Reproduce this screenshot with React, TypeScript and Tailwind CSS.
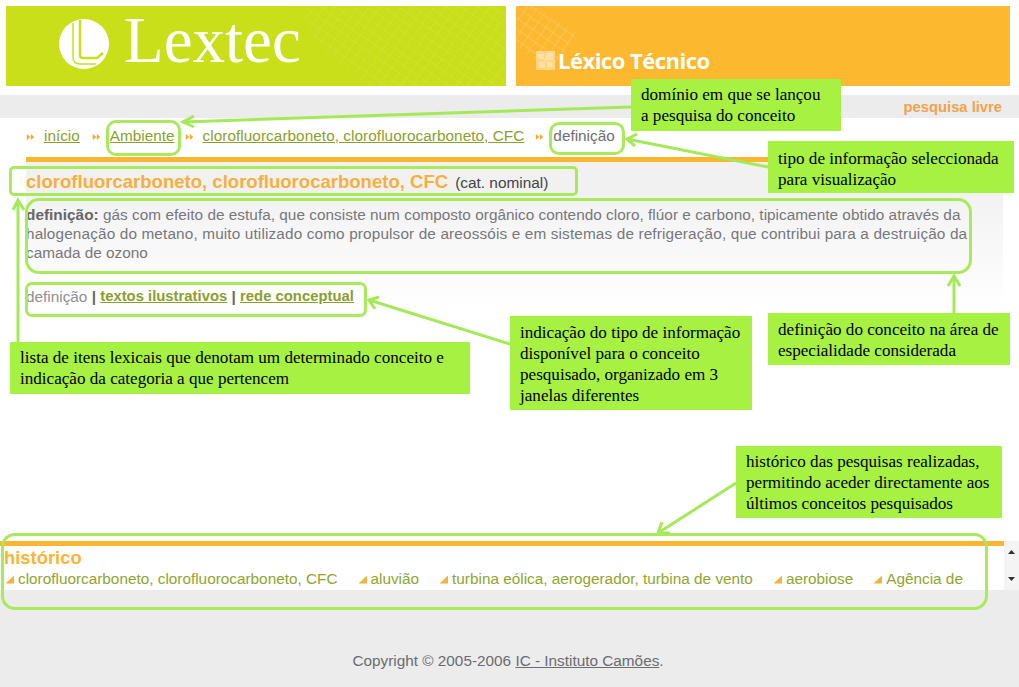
import React from "react";

const ring = "absolute border-[3px] border-[#a8ea5c] rounded-[10px]";
const callout = "absolute bg-[#a6f142] text-black text-[17.1px] leading-[21px] font-['Liberation_Serif',serif] pl-[10px] whitespace-nowrap";
const link = "text-[#8ba02c] underline";

function Chevrons() {
  return (
    <svg width="9" height="8" viewBox="0 0 9 8" className="shrink-0 mt-[2px]">
      <path d="M1 1.5 L4 4 L1 6.5 Z M5 1.5 L8 4 L5 6.5 Z" fill="#f6a82c" stroke="#f6a82c" strokeWidth="0.5" />
    </svg>
  );
}

function Crumb({ children, className }: { children: React.ReactNode; className: string }) {
  return (
    <span className={`flex items-center gap-[9px] ${className}`}>
      <Chevrons />
      {children}
    </span>
  );
}

function HistoryItem({ label }: { label: string }) {
  return (
    <span className="flex items-center gap-[3px] whitespace-nowrap mr-[20px]">
      <svg width="10" height="9" viewBox="0 0 10 9" className="shrink-0">
        <path d="M0.5 8.5 L9 0.5 L9 8.5 Z" fill="#f4b23e" />
      </svg>
      {label}
    </span>
  );
}

function Hatch({ id, points, opacity }: { id: string; points: string; opacity: number }) {
  return (
    <svg className="absolute inset-0 w-full h-full" aria-hidden="true">
      <defs>
        <pattern id={id} width="9" height="9" patternUnits="userSpaceOnUse" patternTransform="rotate(35)">
          <path d="M0 0H9M0 0V9" stroke="#ffffff" strokeOpacity={opacity} strokeWidth="1" fill="none" />
        </pattern>
      </defs>
      <polygon points={points} fill={`url(#${id})`} />
    </svg>
  );
}

function Overlay() {
  const c = "#a4ea58";
  const head = (pts: string) => <polyline points={pts} fill="none" stroke={c} strokeWidth="3" />;
  return (
    <svg className="absolute inset-0 pointer-events-none" width="1019" height="687">
      <line x1="631" y1="107" x2="183" y2="122" stroke={c} strokeWidth="3" />
      {head("194,116 183,122 194,127")}
      <line x1="768" y1="167" x2="627" y2="139" stroke={c} strokeWidth="3" />
      {head("637,134 627,139 635,146")}
      <line x1="18" y1="342" x2="18" y2="200" stroke={c} strokeWidth="3" />
      {head("13,210 18,200 24,210")}
      <line x1="510" y1="344" x2="369" y2="300" stroke={c} strokeWidth="3" />
      {head("379,297 369,300 375,309")}
      <line x1="954" y1="313" x2="954" y2="276" stroke={c} strokeWidth="3" />
      {head("948,286 954,276 960,286")}
      <line x1="736" y1="483" x2="658" y2="533" stroke={c} strokeWidth="3" />
      {head("662,522 658,533 670,533")}
    </svg>
  );
}

export default function App() {
  return (
    <div className="relative w-[1019px] h-[687px] overflow-hidden bg-white font-['Liberation_Sans',Arial,sans-serif] text-[15.33px] flex flex-col">
      <header className="h-[95px] shrink-0 flex gap-[10px] pl-[6px] pr-[9px] pt-[6px]">
        <div className="relative w-[500px] h-[80px] bg-[#c8df19] flex items-center pl-[53px] gap-[15px]">
          <Hatch id="hatchGreen" opacity={0.17} points="295,0 500,0 500,80 365,80 310,40" />
          <svg width="50" height="50" viewBox="0 0 50 50" className="relative shrink-0 mt-[-4px]">
            <circle cx="25" cy="25" r="25" fill="#ffffff" />
            <path d="M14 4 V38 Q14 45 21 45 H37" fill="none" stroke="#c8df19" strokeWidth="1.5" />
            <path d="M21 1 V36 Q21 39 24 39 H38 L44 34" fill="none" stroke="#c8df19" strokeWidth="2.5" />
          </svg>
          <span className="relative text-white text-[65px] leading-none font-['Liberation_Serif',serif] mt-[-11px]">Lextec</span>
        </div>
        <div className="relative w-[494px] h-[80px] bg-[#fcb82f] flex items-center pl-[20px] pt-[28px] gap-[3px]">
          <Hatch id="hatchOrange" opacity={0.32} points="0,0 16,0 61,27 36,66 0,40" />
          <svg width="19" height="19" viewBox="0 0 19 19" className="relative shrink-0">
            <rect width="19" height="19" fill="#ffffff" fillOpacity="0.4" />
            <path d="M2 3H8V8H2ZM10 2H17V9H10ZM3 11H9V17H3ZM11 11H16V16H11Z" fill="#ffffff" fillOpacity="0.25" />
          </svg>
          <span className="relative text-white text-[22px] font-bold leading-none font-['Open_Sans',sans-serif] tracking-[-0.5px]">Léxico Técnico</span>
        </div>
      </header>

      <div className="h-[23px] shrink-0 bg-[#ececec] flex items-center justify-end pr-[17px] pt-[1px]">
        <span className="text-[#f2a24a] text-[14.75px] font-bold">pesquisa livre</span>
      </div>

      <main className="flex-1 pl-[26px] pr-[16px] flex flex-col">
        <nav className="h-[39px] shrink-0 flex items-center pb-[3px] whitespace-nowrap">
          <Crumb className="mr-[12px]"><a className={link}>início</a></Crumb>
          <Crumb className="mr-[10px]"><a className={link}>Ambiente</a></Crumb>
          <Crumb className="mr-[11px]"><a className={`${link} tracking-[0.05px]`}>clorofluorcarboneto, clorofluorocarboneto, CFC</a></Crumb>
          <Crumb className="mr-[11px]"><span className="text-[#6d6d72]">definição</span></Crumb>
        </nav>
        <div className="h-[5px] shrink-0 bg-[#fbb52e]" />
        <div className="h-[33px] shrink-0 bg-[#f1f1f1] flex items-baseline gap-[7px] pt-[6px] whitespace-nowrap">
          <span className="text-[#f5b040] text-[18.55px] font-bold">clorofluorcarboneto, clorofluorocarboneto, CFC</span>
          <span className="text-[#444] text-[15.4px]">(cat. nominal)</span>
        </div>
        <section className="h-[114px] shrink-0 bg-gradient-to-b from-[#f2f2f2] to-white text-[#77777c] leading-[19px] pt-[10px] pb-[3px] flex flex-col justify-between">
          <p className="whitespace-nowrap">
            <span className="tracking-[0.03px]"><b className="text-[#666]">definição:</b> gás com efeito de estufa, que consiste num composto orgânico contendo cloro, flúor e carbono, tipicamente obtido através da</span><br />
            <span className="tracking-[0.14px]">halogenação do metano, muito utilizado como propulsor de areossóis e em sistemas de refrigeração, que contribui para a destruição da</span><br />
            camada de ozono
          </p>
          <div className="h-[20px] flex items-center text-[#8f8f94] whitespace-pre">
            definição <b className="text-[#666]">| </b><a className={`${link} font-bold text-[14.85px]`}>textos ilustrativos</a><b className="text-[#666]"> | </b><a className={`${link} font-bold text-[14.85px]`}>rede conceptual</a>
          </div>
        </section>
      </main>

      <section className="shrink-0 h-[49px] flex">
        <div className="w-[1004px] border-t-[5px] border-[#fbb52e] bg-white overflow-hidden">
          <div className="text-[#f9b634] text-[18.4px] font-bold leading-[19px] pl-[4px] mt-[2px]">histórico</div>
          <div className="flex pl-[5px] text-[#8fa52e] leading-[18px] mt-[3px]">
            <HistoryItem label="clorofluorcarboneto, clorofluorocarboneto, CFC" />
            <HistoryItem label="aluvião" />
            <HistoryItem label="turbina eólica, aerogerador, turbina de vento" />
            <HistoryItem label="aerobiose" />
            <HistoryItem label="Agência de" />
          </div>
        </div>
        <div className="flex-1 bg-[#f4f4f4] flex flex-col items-center justify-between py-[9px]">
          <svg width="7" height="4" viewBox="0 0 7 4"><path d="M0 4 L3.5 0 L7 4 Z" fill="#333" /></svg>
          <svg width="7" height="4" viewBox="0 0 7 4"><path d="M0 0 L3.5 4 L7 0 Z" fill="#333" /></svg>
        </div>
      </section>

      <footer className="h-[97px] shrink-0 bg-[#ececec] flex justify-center pt-[60px] pr-[3px] text-[#6b6b70]">
        <span>Copyright © 2005-2006 <a className="underline">IC - Instituto Camões</a>.</span>
      </footer>

      <Overlay />

      <div className={`${ring} left-[106px] top-[120px] w-[75px] h-[36px]`} />
      <div className={`${ring} left-[549px] top-[122px] w-[76px] h-[33px]`} />
      <div className={`${ring} left-[9px] top-[166px] w-[569px] h-[30px] !rounded-[5px]`} />
      <div className={`${ring} left-[25px] top-[198px] w-[947px] h-[76px] !rounded-[14px]`} />
      <div className={`${ring} left-[25px] top-[282px] w-[342px] h-[35px] !rounded-[7px]`} />
      <div className={`${ring} left-[1px] top-[533px] w-[987px] h-[77px] !rounded-[14px]`} />

      <div className={`${callout} left-[631px] top-[79px] w-[210px] h-[52px] pt-[5px]`}>domínio em que se lançou<br />a pesquisa do conceito</div>
      <div className={`${callout} left-[768px] top-[141px] w-[246px] h-[52px] pt-[7px]`}>tipo de informação seleccionada<br />para visualização</div>
      <div className={`${callout} left-[10px] top-[342px] w-[460px] h-[52px] pt-[5px]`}>lista de itens lexicais que denotam um determinado conceito e<br />indicação da categoria a que pertencem</div>
      <div className={`${callout} left-[510px] top-[316px] w-[242px] h-[94px] pt-[6px]`}>indicação do tipo de informação<br />disponível para o conceito<br />pesquisado, organizado em 3<br />janelas diferentes</div>
      <div className={`${callout} left-[768px] top-[313px] w-[242px] h-[52px] pt-[6px]`}>definição do conceito na área de<br />especialidade considerada</div>
      <div className={`${callout} left-[736px] top-[446px] w-[266px] h-[72px] pt-[5px]`}>histórico das pesquisas realizadas,<br />permitindo aceder directamente aos<br />últimos conceitos pesquisados</div>
    </div>
  );
}
